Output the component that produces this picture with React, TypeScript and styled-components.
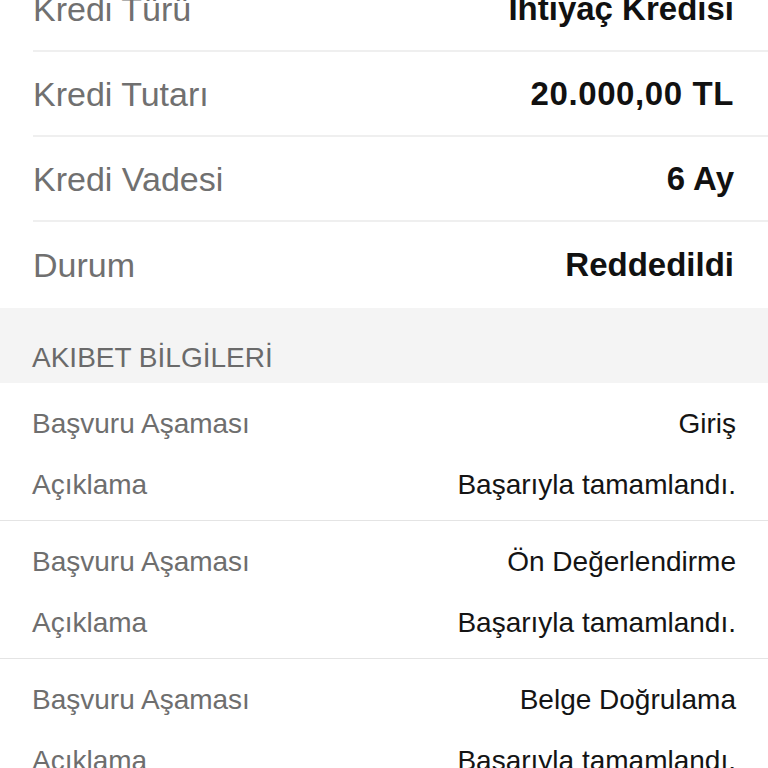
import React from "react";
import styled, { createGlobalStyle } from "styled-components";

const GlobalStyle = createGlobalStyle`
  html, body {
    margin: 0;
    padding: 0;
    background: #ffffff;
    font-family: "Liberation Sans", Arial, sans-serif;
    overflow: hidden;
  }
`;

// Kredi özet satırları
const summary = [
  { label: "Kredi Türü", value: "İhtiyaç Kredisi" },
  { label: "Kredi Tutarı", value: "20.000,00 TL", wide: true },
  { label: "Kredi Vadesi", value: "6 Ay" },
  { label: "Durum", value: "Reddedildi" },
];

// Akıbet adımları
const steps = [
  { stage: "Giriş", note: "Başarıyla tamamlandı." },
  { stage: "Ön Değerlendirme", note: "Başarıyla tamamlandı." },
  { stage: "Belge Doğrulama", note: "Başarıyla tamamlandı." },
];

const App = () => {
  return (
    <>
      <GlobalStyle />
      <Screen>
        <Summary>
          {summary.map((row, i) => (
            <SummaryRow key={row.label} $last={i === summary.length - 1}>
              <SummaryLabel>{row.label}</SummaryLabel>
              <SummaryValue $wide={row.wide}>{row.value}</SummaryValue>
            </SummaryRow>
          ))}
        </Summary>

        <SectionHeader>AKIBET BİLGİLERİ</SectionHeader>

        <StepList>
          {steps.map((step) => (
            <StepGroup key={step.stage}>
              <StepLine>
                <StepLabel>Başvuru Aşaması</StepLabel>
                <StepValue>{step.stage}</StepValue>
              </StepLine>
              <StepLine>
                <StepLabel>Açıklama</StepLabel>
                <StepValue>{step.note}</StepValue>
              </StepLine>
            </StepGroup>
          ))}
        </StepList>
      </Screen>
    </>
  );
};

const Screen = styled.div`
  width: 768px;
  height: 768px;
  overflow: hidden;
  background: #ffffff;
`;

const Summary = styled.div`
  margin-top: -33px;
  padding-left: 33px;
  background: #ffffff;
`;

const SummaryRow = styled.div<{ $last?: boolean }>`
  display: flex;
  align-items: center;
  justify-content: space-between;
  height: ${(p) => (p.$last ? "86px" : "83px")};
  padding-right: 34px;
  border-bottom: ${(p) => (p.$last ? "none" : "2px solid #efefef")};
`;

const SummaryLabel = styled.span`
  font-size: 34px;
  line-height: 40px;
  color: #707070;
`;

const SummaryValue = styled.span<{ $wide?: boolean }>`
  font-size: 33px;
  line-height: 40px;
  font-weight: 700;
  color: #111111;
  letter-spacing: ${(p) => (p.$wide ? "0.6px" : "0")};
`;

const SectionHeader = styled.div`
  height: 75px;
  box-sizing: border-box;
  padding: 33px 32px 0;
  background: #f4f4f4;
  font-size: 28px;
  line-height: 34px;
  color: #6a6a6a;
`;

const StepList = styled.div`
  background: #ffffff;
`;

const StepGroup = styled.div`
  padding: 10px 32px 5px;
  border-bottom: 1px solid #e4e4e4;
`;

const StepLine = styled.div`
  display: flex;
  align-items: center;
  justify-content: space-between;
  height: 61px;
`;

const StepLabel = styled.span`
  font-size: 28px;
  line-height: 34px;
  color: #6e6e6e;
`;

const StepValue = styled.span`
  font-size: 28px;
  line-height: 34px;
  color: #141414;
`;

export default App;
